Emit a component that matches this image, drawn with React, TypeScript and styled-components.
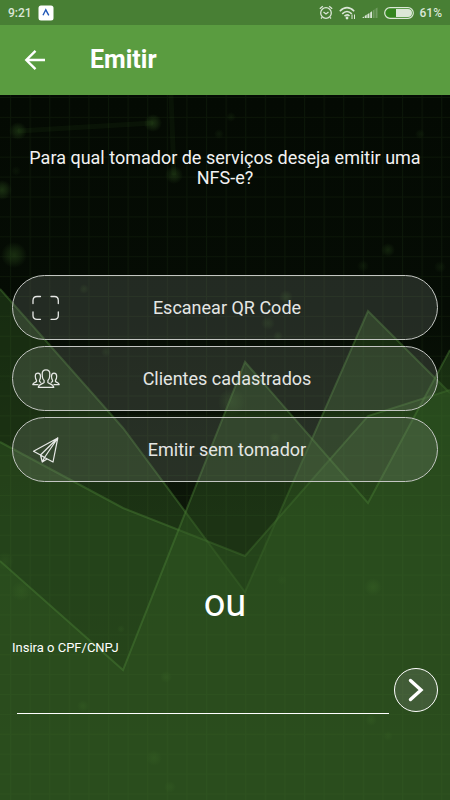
import React from "react";
import styled, { createGlobalStyle } from "styled-components";

const GlobalStyle = createGlobalStyle`
  *, *::before, *::after { box-sizing: border-box; }
  body {
    margin: 0;
    background: #2a4b1d;
    font-family: Roboto, "Liberation Sans", sans-serif;
    color: #fff;
  }
  button, input { font: inherit; color: inherit; }
`;

const Screen = styled.div`
  min-height: 100vh;
  display: flex;
  flex-direction: column;
`;

const StatusBar = styled.div`
  display: flex;
  align-items: center;
  justify-content: space-between;
  height: 25px;
  padding: 0 8px;
  background: #487f34;
  color: #dbe6d7;
  font-size: 12px;
  font-weight: 500;
`;

const StatusGroup = styled.div`
  display: flex;
  align-items: center;
  gap: 6px;
`;

const Header = styled.header`
  display: flex;
  align-items: center;
  gap: 42px;
  height: 70px;
  padding: 0 22px;
  background: #5a9c40;
`;

const BackButton = styled.button`
  display: flex;
  padding: 0;
  border: 0;
  background: none;
  cursor: pointer;
`;

const Title = styled.h1`
  margin: 0;
  font-size: 25px;
  line-height: 30px;
  font-weight: 700;
`;

const Main = styled.main`
  position: relative;
  isolation: isolate;
  flex: 1;
  display: flex;
  flex-direction: column;
  padding: 53px 12px 48px;
`;

const Backdrop = styled.svg`
  position: absolute;
  inset: 0;
  z-index: -1;
  width: 100%;
  height: 100%;
`;

const Question = styled.p`
  margin: 0 16px 87px;
  font-size: 18px;
  line-height: 20px;
  text-align: center;
  color: #f2f2f2;
`;

const Options = styled.div`
  display: flex;
  flex-direction: column;
  gap: 6px;
`;

const OptionButton = styled.button`
  display: grid;
  grid-template-columns: 28px 1fr 24px;
  align-items: center;
  height: 65px;
  padding: 0 18px;
  border: 1px solid #c3c6c2;
  border-radius: 33px;
  background: rgba(128, 134, 128, 0.25);
  font-size: 18px;
  color: #e4e6e3;
  cursor: pointer;
`;

const Divider = styled.p`
  margin: 99px 0 0;
  font-size: 38px;
  line-height: 44px;
  text-align: center;
`;

const Form = styled.form`
  display: flex;
  flex-direction: column;
  margin-top: 15px;
`;

const FieldLabel = styled.label`
  font-size: 13px;
  line-height: 16px;
`;

const FieldRow = styled.div`
  display: flex;
  align-items: flex-end;
  gap: 5px;
  padding-left: 5px;
`;

const Field = styled.input`
  flex: 1;
  min-width: 0;
  height: 42px;
  margin-top: 16px;
  padding: 0 4px;
  border: 0;
  border-bottom: 1px solid #fff;
  border-radius: 0;
  background: none;
  font-size: 18px;
  outline: none;
`;

const SubmitButton = styled.button`
  display: flex;
  align-items: center;
  justify-content: center;
  width: 44px;
  height: 44px;
  margin-bottom: 2px;
  padding: 0;
  border: 1px solid #fff;
  border-radius: 50%;
  background: rgba(160, 160, 160, 0.2);
  cursor: pointer;
`;

const AREAS = [
  "0,194 123,333 245,497 368,216 450,298",
  "0,347 123,413 245,461 368,321 450,295",
  "0,466 123,575 245,267 368,408 450,255",
];

const GLOWS = [
  [18, 36, 9, 0.5], [153, 28, 9, 0.55], [174, 80, 9, 0.45], [2, 95, 10, 0.55],
  [14, 160, 13, 0.5], [388, 155, 7, 0.35], [231, 22, 5, 0.2], [219, 39, 5, 0.2],
  [420, 39, 5, 0.2], [16, 76, 5, 0.15], [363, 171, 6, 0.2], [440, 172, 6, 0.2],
  [84, 194, 5, 0.3], [286, 202, 7, 0.35], [268, 228, 7, 0.3], [278, 241, 5, 0.3],
  [106, 257, 5, 0.25], [232, 307, 14, 0.4], [275, 343, 6, 0.3], [5, 466, 9, 0.3],
  [21, 496, 10, 0.4], [121, 534, 4, 0.3], [166, 582, 6, 0.4], [83, 611, 6, 0.4],
  [154, 663, 8, 0.4], [170, 692, 6, 0.35], [373, 492, 9, 0.5], [371, 625, 6, 0.4],
  [388, 641, 5, 0.3], [282, 485, 5, 0.2],
];

function Background() {
  return (
    <Backdrop viewBox="0 0 450 705" preserveAspectRatio="none" aria-hidden="true">
      <defs>
        <linearGradient id="night" x1="0" y1="0" x2="0" y2="1">
          <stop offset="0" stopColor="#040a03" />
          <stop offset="0.3" stopColor="#050c04" />
          <stop offset="0.6" stopColor="#0d1709" />
          <stop offset="1" stopColor="#12200c" />
        </linearGradient>
        <radialGradient id="glow">
          <stop offset="0" stopColor="#3d6b28" stopOpacity="0.7" />
          <stop offset="0.5" stopColor="#3d6b28" stopOpacity="0.4" />
          <stop offset="1" stopColor="#3d6b28" stopOpacity="0" />
        </radialGradient>
        <pattern id="grid" x="10" y="2" width="19.6" height="19.9" patternUnits="userSpaceOnUse">
          <path d="M.5 0V20M0 .5H20" stroke="#4a7a30" strokeOpacity="0.11" />
        </pattern>
      </defs>
      <rect width="450" height="705" fill="url(#night)" />
      <path d="M18 36L153 28M171 0L174 80" stroke="#3d6b28" strokeOpacity="0.09" strokeWidth="5" />
      {AREAS.map((points) => (
        <g key={points}>
          <polygon points={`${points} 450,705 0,705`} fill="#315822" fillOpacity="0.43" />
          <polyline points={points} fill="none" stroke="#4c8436" strokeOpacity="0.42" strokeWidth="2" />
        </g>
      ))}
      <rect width="450" height="705" fill="url(#grid)" />
      {GLOWS.map(([x, y, r, o]) => (
        <circle key={`${x}-${y}`} cx={x} cy={y} r={r} fill="url(#glow)" opacity={o} />
      ))}
    </Backdrop>
  );
}

const iconProps = {
  fill: "none",
  stroke: "#e6e8e5",
  strokeLinecap: "round" as const,
  strokeLinejoin: "round" as const,
  "aria-hidden": true,
};

const ScanIcon = () => (
  <svg width="28" height="26" viewBox="0 0 28 26" {...iconProps} strokeWidth="1.3">
    <path d="M9.500 1.500H6Q2 1.500 2 5.500V8.500M20 1.500H23.500Q27.300 1.500 27.300 5.500V8.500M2 17V20.500Q2 24.300 6 24.300H9.500M27.300 17V20.500Q27.300 24.300 23.500 24.300H20" />
  </svg>
);

const PeopleIcon = () => (
  <svg width="28" height="20" viewBox="0 0 28 20" {...iconProps} strokeWidth="1.250" overflow="visible">
    <g transform="translate(1 0)">
      <path d="M14 .8C11.300.8 10.100 2.600 10.200 5L10.400 8C10.600 9.700 11.400 10.900 12.100 11.500V13.600C11 14.800 6.500 14.800 6.300 18.400H21.700C21.500 14.800 17 14.800 15.900 13.600V11.500C16.600 10.900 17.400 9.700 17.600 8L17.800 5C17.900 2.600 16.700.8 14 .8Z" />
      <path d="M8.700 13.300L7.500 12.500V11.200C8.300 10.500 8.500 9.300 8.500 7.300C8.500 5 7.600 4 6 4S3.300 5 3.300 7.300C3.300 9.300 3.700 10.500 4.500 11.200V12.500C3.500 13.500 1 13.500.8 15.600H6M19.300 13.300L20.500 12.500V11.200C19.700 10.500 19.500 9.300 19.500 7.300C19.500 5 20.400 4 22 4S24.700 5 24.700 7.300C24.700 9.300 24.300 10.500 23.500 11.200V12.500C24.500 13.500 27 13.500 27.200 15.600H22" />
    </g>
  </svg>
);

const PlaneIcon = () => (
  <svg width="28" height="26" viewBox="0 0 28 26" {...iconProps} strokeWidth="1.250">
    <path d="M26.800 1L2.500 14.300L9.500 18L26.800 1L22 25L13.500 20.500L26.800 1M9.500 18L11.300 25L13.500 20.500M11.300 25L16 22M9.500 18L13.500 20.500" />
  </svg>
);

const StatusIcons = () => (
  <>
    <svg width="14" height="15" viewBox="0 0 14 15" fill="none" stroke="#dbe6d7" strokeWidth="1.300" role="img" aria-label="Alarme">
      <circle cx="7" cy="8" r="5.300" />
      <path d="M4.500 7L7 9L9.500 7M.8 3.800L3.800 1.300M13.200 3.800L10.200 1.300M3 12.300L2 13.500M11 12.300L12 13.500" />
    </svg>
    <svg width="17" height="14" viewBox="0 0 17 14" fill="none" stroke="#dbe6d7" strokeWidth="1.600" role="img" aria-label="Wi-Fi">
      <path d="M.8 5.200Q8 -1.800 15.200 5.200M3.200 7.800Q8 3.200 12.800 7.800M5.500 10.200Q8 7.800 10.500 10" />
      <circle cx="8" cy="12" r="1.400" fill="#dbe6d7" stroke="none" />
      <path d="M13 8.500V13M15.500 8.500V13" strokeWidth="1" />
    </svg>
    <svg width="16" height="12" viewBox="0 0 16 12" fill="#dbe6d7" role="img" aria-label="Sinal">
      <path d="M0 11L2 9.500V11ZM2.700 11V9L4.700 7.500V11ZM5.400 11V7.300L7.400 6V11ZM8.200 11V5.500L10 4.200V11Z" />
      <path d="M10.800 11V3.500L12.600 2.300V11ZM13.500 11V1.700L15.500.5V11Z" opacity="0.28" />
    </svg>
    <svg width="30" height="12" viewBox="0 0 30 12" role="img" aria-label="Bateria">
      <rect x="0.700" y="0.700" width="28.600" height="10.600" rx="5.300" fill="#34851f" stroke="#dbe6d7" strokeWidth="1.200" />
      <path d="M12 2H24A4 4 0 0 1 24 10H12Z" fill="#dbe6d7" />
    </svg>
  </>
);

const OPTIONS = [
  { label: "Escanear QR Code", Icon: ScanIcon },
  { label: "Clientes cadastrados", Icon: PeopleIcon },
  { label: "Emitir sem tomador", Icon: PlaneIcon },
];

export default function App() {
  return (
    <Screen>
      <GlobalStyle />
      <StatusBar>
        <StatusGroup>
          <span>9:21</span>
          <svg width="16" height="16" viewBox="0 0 16 16" aria-hidden="true">
            <rect x="0.500" y="0.500" width="15" height="15" rx="2.500" fill="#fff" />
            <path d="M5 10.300L7.800 4.800L10.800 10.300" fill="none" stroke="#2258b8" strokeWidth="1.400" />
          </svg>
        </StatusGroup>
        <StatusGroup>
          <StatusIcons />
          <span>61%</span>
        </StatusGroup>
      </StatusBar>
      <Header>
        <BackButton type="button" aria-label="Voltar">
          <svg width="26" height="26" viewBox="0 0 26 26" fill="none" stroke="#fff" strokeWidth="2.400" aria-hidden="true">
            <path d="M23 13H4.500M13.500 3.800L4.300 13L13.500 22.200" />
          </svg>
        </BackButton>
        <Title>Emitir</Title>
      </Header>
      <Main>
        <Background />
        <Question>Para qual tomador de serviços deseja emitir uma NFS-e?</Question>
        <Options>
          {OPTIONS.map(({ label, Icon }) => (
            <OptionButton key={label} type="button">
              <Icon />
              <span>{label}</span>
            </OptionButton>
          ))}
        </Options>
        <Divider>ou</Divider>
        <Form onSubmit={(e) => e.preventDefault()}>
          <FieldLabel htmlFor="document">Insira o CPF/CNPJ</FieldLabel>
          <FieldRow>
            <Field id="document" type="text" inputMode="numeric" />
            <SubmitButton type="submit" aria-label="Continuar">
              <svg width="24" height="24" viewBox="0 0 24 24" fill="none" stroke="#fff" strokeWidth="3.400" strokeLinecap="round" aria-hidden="true">
                <path d="M6.500 2.500L17 12L6.500 21.500" />
              </svg>
            </SubmitButton>
          </FieldRow>
        </Form>
      </Main>
    </Screen>
  );
}
